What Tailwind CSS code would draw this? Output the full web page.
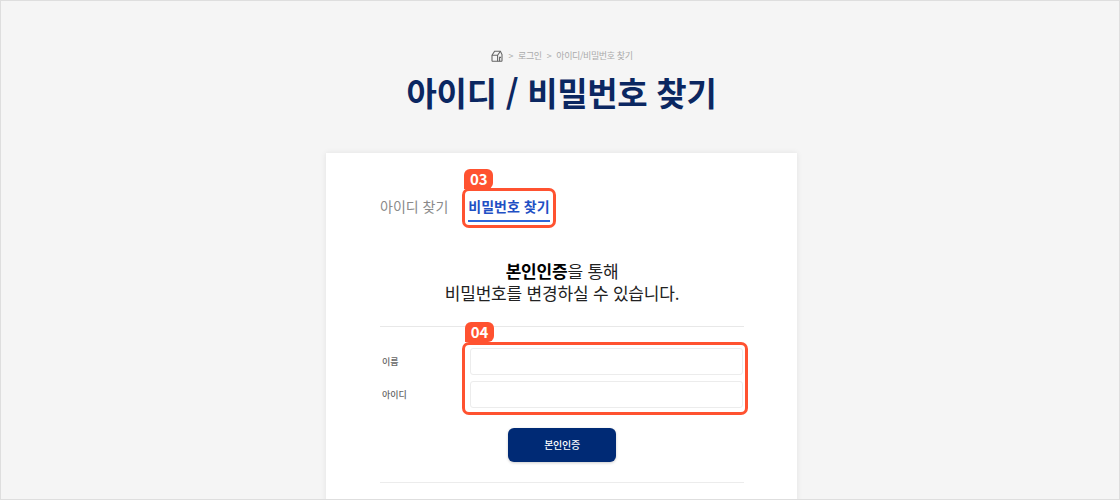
<!DOCTYPE html>
<html lang="ko">

<head>
  <meta charset="UTF-8">
  <title>아이디 / 비밀번호 찾기</title>
  <script src="https://cdn.jsdelivr.net/npm/@tailwindcss/browser@4"></script>
</head>

<body class="w-[1120px] h-[500px] overflow-hidden bg-[#f5f5f5] font-['Noto_Sans_CJK_KR','Noto_Sans',sans-serif]">
  <div class="w-full h-full border border-[#dedede] flex flex-col items-center overflow-hidden">

    <!-- breadcrumb -->
    <div class="mt-[48px] ml-[4px] h-[14px] flex items-center gap-[5px] text-[9px] text-[#ababab] tracking-[-0.4px]">
      <svg class="w-[12px] h-[12px]" viewBox="0 0 12 12" fill="none" stroke="#666" stroke-width="1.1">
        <path d="M1 5.2 3.6 1.2H9.4L11 4.6V10.6a.6.6 0 0 1-.6.6H1.6a.6.6 0 0 1-.6-.6Z" />
        <path d="M1 5.2H6.6L9.4 1.2M6.6 5.2V11.2M8.6 11.2V7.4H10" />
      </svg>
      <span>&gt;</span>
      <span>로그인</span>
      <span>&gt;</span>
      <span>아이디/비밀번호 찾기</span>
    </div>

    <h1 class="mt-[4px] ml-[3px] h-[50px] leading-[50px] text-[33px] font-bold text-[#0b2761] tracking-[-0.3px]">아이디 / 비밀번호 찾기</h1>

    <!-- card -->
    <main class="mt-[36px] ml-[3px] w-[471px] h-[400px] shrink-0 bg-white shadow-[0_0_6px_rgba(0,0,0,0.08)] pl-[54px] pr-[53px]">

      <!-- tabs -->
      <div class="mt-[41px] flex items-start gap-[20px] h-[28px]">
        <span class="text-[14px] leading-[24px] text-[#8a8a8a]">아이디 찾기</span>
        <div class="relative">
          <div class="text-[14px] leading-[24px] font-bold text-[#1f50c4] border-b-2 border-[#2f66d8] h-[28px]">비밀번호 찾기</div>
          <div class="absolute left-[-6px] top-[-6px] w-[94px] h-[40px] border-[3px] border-[#ff5230] rounded-[7px]"></div>
          <div class="absolute left-[-4px] top-[-25px] w-[29px] h-[20px] bg-[#ff5230] rounded-t-[6px] rounded-br-[6px] text-white text-[15px] leading-[20px] font-bold text-center">03</div>
        </div>
      </div>

      <!-- description -->
      <p class="mt-[38px] text-center text-[17px] leading-[22px] text-[#222] tracking-[-0.2px]"><b class="font-bold text-black">본인인증</b>을 통해<br>비밀번호를 변경하실 수 있습니다.</p>

      <div class="mt-[22px] border-t border-[#e8e8e8]"></div>

      <!-- form -->
      <div class="relative mt-[21px] flex flex-col gap-[6px]">
        <label class="flex items-center h-[27px]">
          <span class="w-[90px] pl-[2px] pt-[2px] text-[9px] font-medium text-[#666]">이름</span>
          <input class="w-[273px] h-[27px] bg-white border border-[#ececec] rounded-[3px]" type="text">
        </label>
        <label class="flex items-center h-[27px]">
          <span class="w-[90px] pl-[2px] pt-[2px] text-[9px] font-medium text-[#666]">아이디</span>
          <input class="w-[273px] h-[27px] bg-white border border-[#ececec] rounded-[3px]" type="text">
        </label>
        <div class="absolute left-[82px] top-[-6px] w-[286px] h-[73px] border-[3px] border-[#ff5230] rounded-[7px]"></div>
        <div class="absolute left-[85px] top-[-26px] w-[29px] h-[20px] bg-[#ff5230] rounded-t-[6px] rounded-br-[6px] text-white text-[15px] leading-[20px] font-bold text-center">04</div>
      </div>

      <div class="mt-[20px] flex justify-center">
        <button class="w-[108px] h-[34px] bg-[#002a75] rounded-[6px] shadow-[0_1px_3px_rgba(0,0,0,0.2)] text-white text-[10px] font-medium tracking-[-0.3px]">본인인증</button>
      </div>

      <div class="mt-[20px] border-t border-[#ececec]"></div>
    </main>
  </div>
</body>

</html>
